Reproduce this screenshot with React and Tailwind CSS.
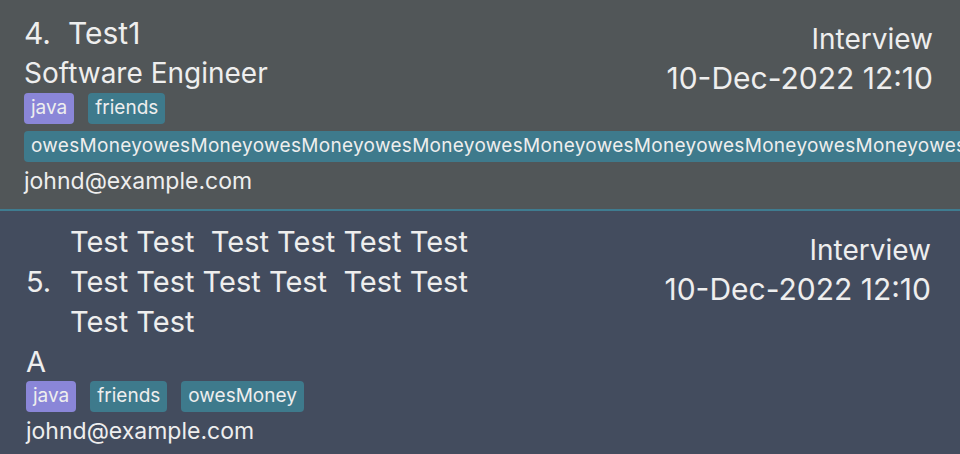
import React from 'react';

const font = { fontFamily: 'Inter, "Noto Sans", sans-serif' };

function Tag({ children, purple, wide }) {
  return (
    <span
      className={`inline-flex items-center h-[31px] px-[7px] rounded-[4px] text-[19px] whitespace-nowrap text-[#eeeeee] ${
        purple ? 'bg-[#8a86d8]' : 'bg-[#3e7a8c]'
      } ${wide ? 'tracking-[0.3px]' : ''}`}
    >
      {children}
    </span>
  );
}

function RightInfo() {
  return (
    <div className="flex flex-col items-end shrink-0 leading-[39px] text-[#eeeeee]">
      <span className="text-[28px]">Interview</span>
      <span className="text-[30px]">10-Dec-2022 12:10</span>
    </div>
  );
}

export default function App() {
  const longTag = 'owesMoney'.repeat(12);
  return (
    <div className="w-[960px] h-[454px] overflow-hidden bg-[#434c5e]" style={font}>
      <div className="h-[211px] bg-[#515658] border-b-2 border-[#3f7c90] flex overflow-hidden pl-6 pr-[27px]">
        <div className="flex-1 min-w-0 pt-[13px] text-[#eeeeee]">
          <div className="flex text-[30px] leading-[40px]">
            <span className="w-[44px] shrink-0">4.</span>
            <span>Test1</span>
          </div>
          <div className="text-[28px] leading-[40px]">Software Engineer</div>
          <div className="flex gap-[14px]">
            <Tag purple>java</Tag>
            <Tag>friends</Tag>
          </div>
          <div className="flex mt-[7px]">
            <Tag wide>{longTag}</Tag>
          </div>
          <div className="text-[23px] leading-[38px]">johnd@example.com</div>
        </div>
        <div className="pt-[20px]">
          <RightInfo />
        </div>
      </div>

      <div className="flex pl-[26px] pr-[29px]">
        <div className="flex-1 min-w-0 pt-[11px] text-[#eeeeee]">
          <div className="flex items-center text-[29px] leading-[40px]">
            <span className="w-[44px] shrink-0">5.</span>
            <div className="flex flex-col whitespace-pre">
              <span>Test Test  Test Test Test Test</span>
              <span>Test Test Test Test  Test Test</span>
              <span>Test Test</span>
            </div>
          </div>
          <div className="text-[29px] leading-[39px]">A</div>
          <div className="flex gap-[14px]">
            <Tag purple>java</Tag>
            <Tag>friends</Tag>
            <Tag>owesMoney</Tag>
          </div>
          <div className="text-[23px] leading-[38px]">johnd@example.com</div>
        </div>
        <div className="pt-[20px]">
          <RightInfo />
        </div>
      </div>
    </div>
  );
}
